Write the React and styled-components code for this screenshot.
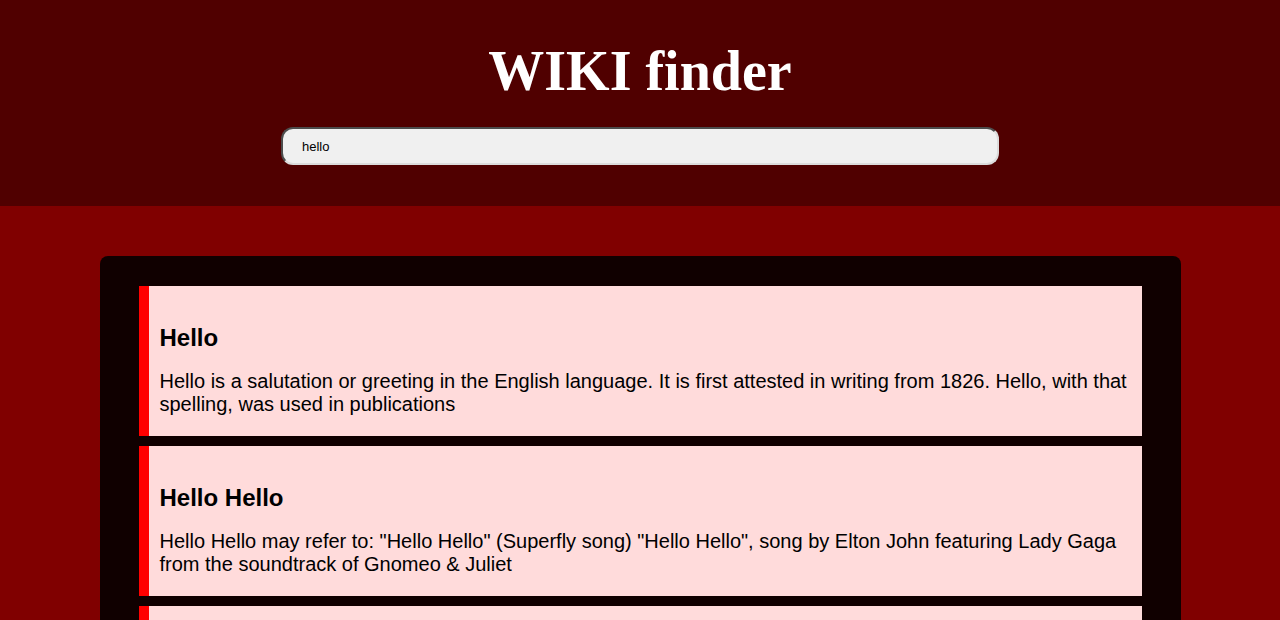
import React, { useState } from 'react';
import styled, { createGlobalStyle } from 'styled-components';

const GlobalStyle = createGlobalStyle`
  html, body {
    margin: 0;
    padding: 0;
    background: #800000;
  }
  * { box-sizing: border-box; }
`;

const Header = styled.header`
  background: #500000;
  padding: 39px 0 41px;
  display: flex;
  flex-direction: column;
  align-items: center;
`;

const Title = styled.h1`
  margin: 0 0 24px;
  font-family: "Liberation Serif", "Times New Roman", serif;
  font-size: 56px;
  font-weight: bold;
  color: #ffffff;
`;

const SearchInput = styled.input`
  width: 718px;
  height: 38px;
  padding: 0 19px;
  border: 2px inset #a0a0a0;
  border-right-color: #dcdcdc;
  border-bottom-color: #dcdcdc;
  border-radius: 12px;
  background: #f0f0f0;
  font-family: "Liberation Sans", Arial, sans-serif;
  font-size: 13px;
  color: #000;
  outline: none;
`;

const Panel = styled.main`
  width: 1081px;
  margin: 50px auto 0;
  padding: 30px 39px;
  background: #100000;
  border-radius: 8px;
  display: flex;
  flex-direction: column;
  gap: 10px;
`;

const Card = styled.article`
  background: #ffdbdb;
  border-left: 10px solid #ff0000;
  padding: 38px 10px 20px 11px;
  font-family: "Liberation Sans", Arial, sans-serif;
  color: #000;
`;

const CardTitle = styled.h2`
  margin: 0 0 18px;
  font-size: 24px;
  font-weight: bold;
`;

const Snippet = styled.p`
  margin: 0;
  font-size: 20px;
`;

const results = [
  {
    title: 'Hello',
    text: 'Hello is a salutation or greeting in the English language. It is first attested in writing from 1826. Hello, with that spelling, was used in publications',
  },
  {
    title: 'Hello Hello',
    text: 'Hello Hello may refer to: "Hello Hello" (Superfly song) "Hello Hello", song by Elton John featuring Lady Gaga from the soundtrack of Gnomeo & Juliet',
  },
  {
    title: 'Hello (Adele song)',
    text: '"Hello" is a song by English singer-songwriter Adele, released on 23 October 2015 as the lead single from her third studio album, 25.',
  },
];

export default function App() {
  const [query, setQuery] = useState('hello');

  return (
    <>
      <GlobalStyle />
      <Header>
        <Title>WIKI finder</Title>
        <SearchInput value={query} onChange={(e) => setQuery(e.target.value)} />
      </Header>
      <Panel>
        {results.map((r) => (
          <Card key={r.title}>
            <CardTitle>{r.title}</CardTitle>
            <Snippet>{r.text}</Snippet>
          </Card>
        ))}
      </Panel>
    </>
  );
}
